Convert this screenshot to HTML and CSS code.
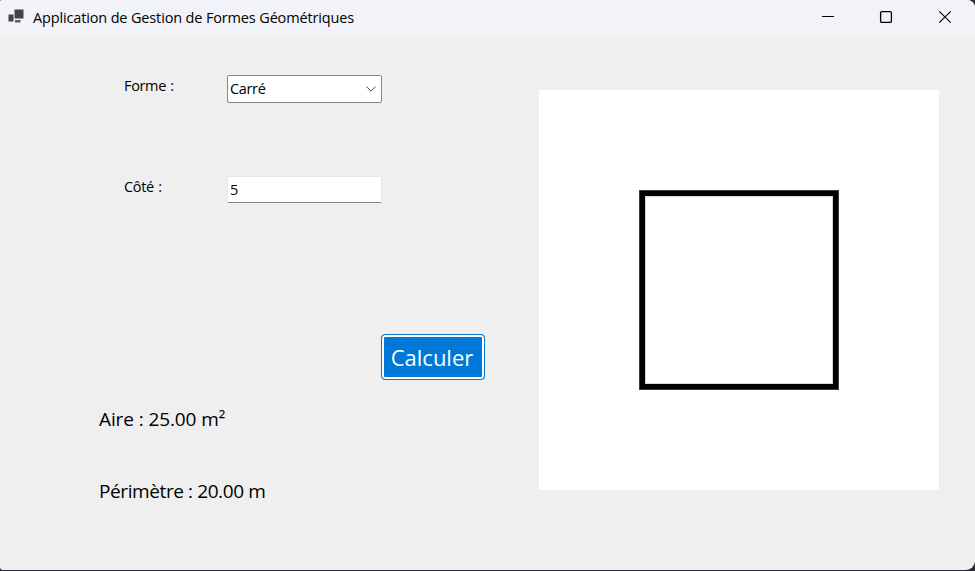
FILE: index.html
```html
<!DOCTYPE html>
<html lang="fr">
<head>
<meta charset="utf-8">
<title>Application de Gestion de Formes Géométriques</title>
<link rel="stylesheet" href="styles.css">
</head>
<body>
<div class="window">
  <header class="titlebar">
    <svg class="app-icon" width="16" height="16" viewBox="0 0 16 16">
      <rect x="0.5" y="5.5" width="5" height="7" fill="#444"/>
      <rect x="6.5" y="0.5" width="9" height="9" fill="#444"/>
      <rect x="7" y="11" width="5.5" height="2.5" fill="#5c5d5f"/>
    </svg>
    <h1 class="title"><span>Application de Gestion de Formes Géométriques</span></h1>
    <div class="controls">
      <svg width="58" height="36" viewBox="0 0 58 36"><path d="M21 16.5h12" stroke="#000"/></svg>
      <svg width="58" height="36" viewBox="0 0 58 36"><rect x="21.6" y="11.6" width="10.8" height="10.8" rx="1.2" fill="none" stroke="#000" stroke-width="1.3"/></svg>
      <svg width="59" height="36" viewBox="0 0 59 36"><path d="M22.3 11.3l11.4 11.4M33.7 11.3L22.3 22.7" stroke="#000" stroke-width="1.15"/></svg>
    </div>
  </header>
  <main class="content">
    <section class="form">
      <div class="field field-shape">
        <label class="label">Forme :</label>
        <div class="select">
          <span>Carré</span>
          <svg width="10" height="6" viewBox="0 0 10 6"><path d="M0.5 0.7L5 5.1L9.5 0.7" fill="none" stroke="#444" stroke-width="1"/></svg>
        </div>
      </div>
      <div class="field field-side">
        <label class="label label-side">Côté :</label>
        <div class="input"><span>5</span></div>
      </div>
      <button class="calculate"><span>Calculer</span></button>
      <p class="result area">Aire : 25.00 m²</p>
      <p class="result perimeter">Périmètre : 20.00 m</p>
    </section>
    <section class="canvas"><div class="square"></div></section>
  </main>
</div>
</body>
</html>
```

FILE: styles.css
```css
* { box-sizing: border-box; }
body {
  margin: 0;
  width: 975px;
  height: 571px;
  overflow: hidden;
  background: #2b2b33;
  color: #000;
  font-family: "Open Sans", "Noto Sans", sans-serif;
}
.window {
  height: 570px;
  background: #efefef;
  border-radius: 2px 8px 9px 3px;
  overflow: hidden;
}
.titlebar {
  display: flex;
  height: 36px;
  padding-left: 8px;
  background: #f1f3f9;
}
.app-icon { margin-top: 9px; }
.title {
  flex: 1;
  margin: 0 0 0 9px;
  font-size: 14.5px;
  font-weight: 400;
  line-height: 36px;
  letter-spacing: -0.15px;
  white-space: nowrap;
}
.controls { display: flex; margin-right: -1px; }
.content { display: flex; height: 534px; }
.form { width: 539px; padding-top: 39px; }
.field {
  display: flex;
  padding-left: 124px;
  font-size: 14.5px;
  letter-spacing: -0.35px;
  word-spacing: 1px;
  white-space: nowrap;
}
.label { width: 103px; line-height: 22px; }
.select {
  display: flex;
  align-items: center;
  justify-content: space-between;
  width: 155px;
  height: 28px;
  padding: 0 5px 0 2px;
  border: 1px solid #888;
  border-radius: 2px;
  background: #fff;
  line-height: 26px;
}
.field-side { margin-top: 73px; }
.input {
  width: 155px;
  height: 27px;
  padding-left: 2px;
  border: 1px solid #e8e8e8;
  border-bottom-color: #858585;
  border-radius: 2px;
  background: #fff;
  line-height: 25px;
}
.calculate {
  display: block;
  width: 104px;
  height: 46px;
  margin: 131px 0 0 381px;
  padding: 0 2px 0 0;
  border: 1px solid #0078d4;
  border-radius: 4px;
  background: #0078d7;
  box-shadow: inset 0 0 0 2px #fff;
  color: #fff;
  font: 22px/44px "Open Sans", "Noto Sans", sans-serif;
}
.result {
  margin: 0 0 0 99px;
  font-size: 19px;
  line-height: 26px;
  letter-spacing: -0.4px;
  white-space: nowrap;
}
.area { margin-top: 26px; letter-spacing: -0.1px; }
.perimeter { margin-top: 46px; }
.canvas {
  display: flex;
  align-items: center;
  justify-content: center;
  width: 400px;
  height: 400px;
  margin-top: 54px;
  background: #fff;
}
.square {
  width: 200px;
  height: 200px;
  border: 6px solid #000;
  outline: 1px solid #3c3c3c;
  outline-offset: -1px;
  box-shadow: inset 0 0 0 1px #d8d8d8;
}
```
